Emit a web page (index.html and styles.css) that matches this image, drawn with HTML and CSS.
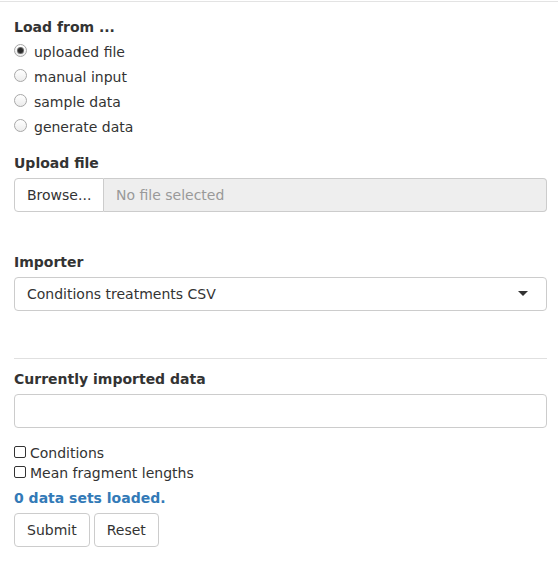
FILE: index.html
```html
<!DOCTYPE html>
<html>
<head>
<meta charset="utf-8">
<link rel="stylesheet" href="styles.css">
</head>
<body>
<div class="page">
  <div class="form-group group-load">
    <label class="control-label">Load from ...</label>
    <div class="options">
      <label class="radio"><span class="radio-dot checked"></span><span>uploaded file</span></label>
      <label class="radio"><span class="radio-dot"></span><span>manual input</span></label>
      <label class="radio"><span class="radio-dot"></span><span>sample data</span></label>
      <label class="radio"><span class="radio-dot"></span><span>generate data</span></label>
    </div>
  </div>

  <div class="form-group group-upload">
    <label class="control-label">Upload file</label>
    <div class="input-group">
      <span class="browse">Browse...</span>
      <span class="file-name">No file selected</span>
    </div>
  </div>

  <div class="form-group group-importer">
    <label class="control-label">Importer</label>
    <div class="select">
      <span>Conditions treatments CSV</span>
      <span class="caret"></span>
    </div>
  </div>

  <hr class="rule">

  <div class="form-group group-current">
    <label class="control-label">Currently imported data</label>
    <div class="text-input"></div>
  </div>

  <div class="checks">
    <label class="check"><span class="box"></span><span>Conditions</span></label>
    <label class="check"><span class="box"></span><span>Mean fragment lengths</span></label>
  </div>

  <div class="status">0 data sets loaded.</div>

  <div class="buttons">
    <button class="btn">Submit</button>
    <button class="btn">Reset</button>
  </div>
</div>
</body>
</html>
```

FILE: styles.css
```css
html, body {
  margin: 0;
  padding: 0;
  background: #fff;
}

body {
  font-family: "DejaVu Sans", sans-serif;
  font-size: 14px;
  line-height: 20px;
  color: #333;
}

.page {
  margin-top: 1px;
  border-top: 1px solid #e3e3e3;
  padding: 15px 11px 0 14px;
}

.control-label {
  display: block;
  font-weight: bold;
  margin-bottom: 5px;
}

.group-load {
  margin-bottom: 16px;
}

.options {
  display: flex;
  flex-direction: column;
  gap: 5px;
}

.radio {
  display: flex;
  align-items: center;
  gap: 7px;
  height: 20px;
}

.radio-dot {
  box-sizing: border-box;
  width: 13px;
  height: 13px;
  border-radius: 50%;
  border: 1px solid #a8a8a8;
  background: linear-gradient(#fff, #ececec);
  display: flex;
  align-items: center;
  justify-content: center;
  margin-top: -4px;
}

.radio-dot.checked::after {
  content: "";
  width: 5px;
  height: 5px;
  border-radius: 50%;
  background: #2b2b2b;
  box-shadow: 0 0 0 1px #6a6a6a;
}

.input-group {
  display: flex;
  height: 34px;
}

.browse {
  box-sizing: border-box;
  width: 90px;
  height: 34px;
  padding: 6px 12px;
  border: 1px solid #ccc;
  border-radius: 4px 0 0 4px;
  background: #fff;
}

.file-name {
  flex: 1;
  box-sizing: border-box;
  height: 34px;
  padding: 6px 12px;
  border: 1px solid #ccc;
  border-left: none;
  border-radius: 0 4px 4px 0;
  background: #eee;
  color: #999;
}

.group-upload {
  margin-bottom: 40px;
}

.select {
  box-sizing: border-box;
  height: 34px;
  padding: 6px 12px;
  border: 1px solid #ccc;
  border-radius: 4px;
  display: flex;
  align-items: center;
  justify-content: space-between;
}

.caret {
  width: 0;
  height: 0;
  border-style: solid;
  border-width: 5px 5px 0;
  border-color: #333 transparent transparent;
  margin-right: 6px;
  margin-top: -1px;
}

.group-importer {
  margin-bottom: 0;
}

.rule {
  border: 0;
  border-top: 1px solid #e0e0e0;
  margin: 47px 0 10px;
}

.text-input {
  box-sizing: border-box;
  height: 34px;
  border: 1px solid #ccc;
  border-radius: 4px;
}

.group-current {
  margin-bottom: 15px;
}

.checks {
  display: flex;
  flex-direction: column;
}

.check {
  display: flex;
  align-items: center;
  height: 20px;
}

.box {
  box-sizing: border-box;
  width: 12px;
  height: 12px;
  border: 1px solid #333;
  border-radius: 2px;
  margin-right: 4px;
  margin-top: -3px;
}

.status {
  margin-top: 5px;
  font-weight: bold;
  color: #337ab7;
}

.buttons {
  display: flex;
  gap: 4px;
  margin-top: 5px;
}

.btn {
  font-family: "DejaVu Sans", sans-serif;
  font-size: 14px;
  line-height: 20px;
  color: #333;
  background: #fff;
  border: 1px solid #ccc;
  border-radius: 4px;
  padding: 6px 12px;
  height: 34px;
}
```
